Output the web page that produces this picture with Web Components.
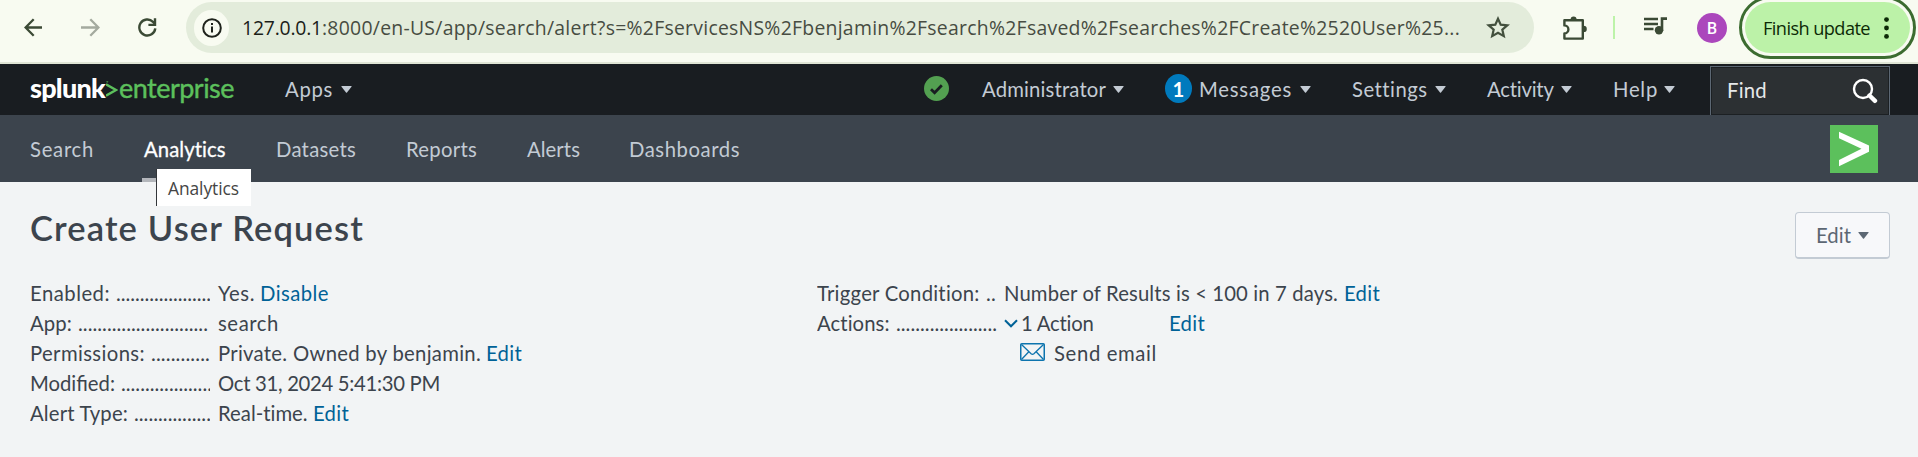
<!DOCTYPE html>
<html lang="en">
<head>
<meta charset="utf-8">
<title>Create User Request</title>
<style>
html,body{margin:0;height:100%;background:#f2f4f5}
body{overflow:hidden;font-family:Lato,"Liberation Sans",sans-serif;font-size:20.3px}
</style>
</head>
<body>
<alert-app></alert-app>
<script>
const define=(name,html,after)=>{
  const t=document.createElement('template');t.innerHTML=html;
  customElements.define(name,class extends HTMLElement{
    constructor(){super();this.attachShadow({mode:'open'}).append(t.content.cloneNode(true));}
    connectedCallback(){if(after)after.call(this);}
  });
};

/* Text tracked to the width given in "w". */
define('fit-text',`<style>:host{display:inline-block;white-space:pre;flex:none}span{display:inline-block}</style><span><slot></slot></span>`,function(){
  const s=this.shadowRoot.querySelector('span');
  const w=+this.getAttribute('w'),n=this.textContent.length;
  s.style.letterSpacing='0px';
  s.style.letterSpacing=((w-s.getBoundingClientRect().width)/n)+'px';
  this.style.width=w+'px';
});

define('caret-down',`<style>:host{display:block;flex:none;width:11px;height:7px}svg{display:block}</style>
<svg width="11" height="7" viewBox="0 0 11 7"><path fill="currentColor" d="M.8 0h9.4q.7 0 .3.7L6 6.4q-.5.5-1 0L.5.7Q.1 0 .8 0z"/></svg>`);

define('browser-bar',`<style>
:host{display:flex;box-sizing:border-box;height:64px;background:#f8fbf1;border-bottom:2px solid #dfe5d5;padding-top:2px;font-family:"Open Sans","Noto Sans",sans-serif;font-size:19.4px;align-items:flex-start}
svg{display:block;flex:none}
.h{height:51px;display:flex;align-items:center;flex:none}
.omni{margin-left:29px;width:1348px;box-sizing:border-box;background:#e3ecdb;border-radius:26px;padding-left:8px;color:#474c42}
.info{width:35px;height:36px;border-radius:18px;background:#f8fbf1;display:flex;align-items:center;justify-content:center;margin-right:13px}
.host{color:#1b1e18}
.div{width:2px;height:23px;background:#bdf3a9;margin-left:26px}
.av{width:30px;height:30px;border-radius:50%;background:#ab47bc;color:#fff;font:500 16px/31px Roboto,sans-serif;text-align:center;margin-left:29px}
.upd{position:relative;margin-left:18px;width:165px;box-sizing:border-box;border-radius:26px;background:#bcf2a8;color:#0c2a06;padding-left:18px;font-size:18.2px;font-stretch:94%}
.upd::before{content:"";position:absolute;left:-6px;right:-6px;top:-6px;bottom:-6px;border:3px solid #3c6c30;border-radius:32px;box-sizing:border-box}
</style>
<div class="h">
<svg style="margin-left:24px" width="19" height="19" viewBox="0 0 19 19" fill="none" stroke="#3b4a35" stroke-width="2.3"><path d="M18 9.5H2M9.7 1.3 1.6 9.5l8.1 8.2"/></svg>
<svg style="margin-left:38px" width="19" height="19" viewBox="0 0 19 19" fill="none" stroke="#a4aa9f" stroke-width="2.3"><path d="M0 9.5h17M9.3 1.3l8.1 8.2-8.1 8.2"/></svg>
<svg style="margin-left:38px" width="19" height="19" viewBox="0 0 19 19"><path fill="none" stroke="#3b4a35" stroke-width="2.4" d="M17.3 10.4A8 8 0 1 1 15 3.8l2 2"/><path fill="none" stroke="#3b4a35" stroke-width="2.4" d="M17 .3v6.6h-6.6"/></svg>
</div>
<div class="h omni">
<div class="info"><svg width="20" height="20" viewBox="0 0 20 20"><circle cx="10" cy="10" r="8.8" fill="none" stroke="#1f231c" stroke-width="2"/><path d="M10 8.6v6M10 5v2" stroke="#1f231c" stroke-width="2"/></svg></div>
<fit-text class="host" w="80">127.0.0.1</fit-text><fit-text w="1138">:8000/en-US/app/search/alert?s=%2FservicesNS%2Fbenjamin%2Fsearch%2Fsaved%2Fsearches%2FCreate%2520User%25...</fit-text>
<svg style="margin-left:26px" width="24" height="23" viewBox="0 0 24 23"><path fill="none" stroke="#43503d" stroke-width="2.2" d="m12 2.7 2.7 6 6.6.6-5 4.3 1.5 6.5-5.8-3.4-5.8 3.4 1.5-6.5-5-4.3 6.6-.6z"/></svg>
</div>
<div class="h">
<svg style="margin-left:28px" width="26" height="26" viewBox="0 0 26 26"><path fill="none" stroke="#3b4a35" stroke-width="2.4" stroke-linejoin="round" d="M2.4 5.2h18.4v18.4H2.4v-5.2a4 4 0 0 0 0-8z"/><path fill="#3b4a35" d="M8.6 4.4a3 3 0 0 1 6 0zM21.6 10.7a3.2 3.2 0 0 1 0 6.4z"/></svg>
<div class="div" style="margin-left:25px"></div>
<svg style="margin:-3px 0 0 29px" width="24" height="18" viewBox="0 0 24 18"><path d="M0 2h14M0 7h14M0 12h9.5" stroke="#3b4a35" stroke-width="2.3"/><circle cx="15" cy="13.3" r="4.2" fill="#3b4a35"/><path d="M18 14V1.6h5" fill="none" stroke="#3b4a35" stroke-width="2.6"/></svg>
<div class="av">B</div>
</div>
<div class="h upd"><fit-text w="107">Finish update</fit-text><svg style="margin-left:14px" width="5" height="22" viewBox="0 0 5 22" fill="#0c2a06"><circle cx="2.5" cy="2.6" r="2.4"/><circle cx="2.5" cy="11" r="2.4"/><circle cx="2.5" cy="19.4" r="2.4"/></svg></div>`);

define('splunk-header',`<style>
:host{display:flex;height:51px;background:#191d21;color:#c3cbd4;align-items:center}
fit-text{position:relative;top:-1px}
caret-down{margin-left:8px}
.logo{display:flex;margin-left:30px;font-size:27px;align-items:center}
.logo fit-text{top:-2px}
.s{color:#fff;font-weight:900}.g{color:#5cc05c;}
.e{font-weight:400;-webkit-text-stroke:.4px #5cc05c}
svg{display:block;flex:none}
.badge{width:27px;height:29px;border-radius:50%;background:#007abd;color:#fff;font-weight:700;text-align:center;line-height:30px;margin:-3px 8px 0 41px}
.find{align-self:flex-start;margin:2px 0 -1px 36px;box-sizing:border-box;width:180px;height:50px;border:1px solid #5c6773;background:#2c3033;box-shadow:inset 0 0 0 1px #1c2023;color:#e6e8ea;display:flex;align-items:center;padding-left:16px;position:relative}
</style>
<div class="logo"><fit-text class="s" w="75">splunk</fit-text><svg style="margin-left:1px" width="12" height="17" viewBox="0 0 12 17"><path d="M0 3.3 10 9 0 14.7" fill="none" stroke="#5cc05c" stroke-width="2.4"/><circle cx="1.3" cy=".8" r="1" fill="#3b7c3d"/></svg><fit-text class="g e" w="115" style="margin-left:1px">enterprise</fit-text></div>
<fit-text w="48" style="margin-left:51px">Apps</fit-text><caret-down></caret-down>
<svg style="margin:-3px 0 0 572px" width="25" height="25" viewBox="0 0 25 25"><circle cx="12.5" cy="12.5" r="12.5" fill="#53a051"/><path d="m7 13.2 3.6 3.5 7.2-7.4" fill="none" stroke="#191d21" stroke-width="2.8"/></svg>
<fit-text w="124" style="margin-left:33px">Administrator</fit-text><caret-down style="margin-left:7px"></caret-down>
<div class="badge">1</div>
<fit-text w="93" style="margin-left:-1px">Messages</fit-text><caret-down style="margin-left:8px"></caret-down>
<fit-text w="75" style="margin-left:41px">Settings</fit-text><caret-down></caret-down>
<fit-text w="67" style="margin-left:41px">Activity</fit-text><caret-down style="margin-left:7px"></caret-down>
<fit-text w="45" style="margin-left:41px">Help</fit-text><caret-down style="margin-left:6px"></caret-down>
<div class="find" style="margin-left:35px"><fit-text w="40" style="top:-1px">Find</fit-text><svg style="margin:-1px 0 0 85px" width="26" height="26" viewBox="0 0 26 26"><circle cx="11" cy="11" r="9" fill="none" stroke="#fff" stroke-width="2.4"/><path d="m17.5 17.5 5.5 5.3" stroke="#fff" stroke-width="4.4" stroke-linecap="round"/></svg></div>`);

define('nav-item',`<style>:host{display:flex;flex:none;height:67px;align-items:center;position:relative}
:host([active]){color:#fff;-webkit-text-stroke:.3px #fff}
:host([active])::after{content:"";position:absolute;left:-2px;right:-2px;bottom:0;height:4px;background:#b3b6bb}</style><slot></slot>`);

define('app-nav',`<style>
:host{display:flex;height:67px;background:#3c444d;color:#c3cbd4;align-items:center;padding-left:30px;position:relative}
nav-item+nav-item{margin-left:50px}
.tip{position:absolute;left:156px;top:54px;width:95px;height:37px;border-left:1px solid #33363a;background:#fff;color:#454545;font-family:"Open Sans",sans-serif;font-size:17.4px;display:flex;align-items:center;padding-left:11px;box-sizing:border-box;z-index:2}
.logo{margin-left:auto;margin-right:40px;margin-top:1px;display:block;background:#5cc05c}
</style>
<nav-item><fit-text w="64">Search</fit-text></nav-item>
<nav-item active><fit-text w="82">Analytics</fit-text></nav-item>
<nav-item><fit-text w="80">Datasets</fit-text></nav-item>
<nav-item><fit-text w="71">Reports</fit-text></nav-item>
<nav-item><fit-text w="53">Alerts</fit-text></nav-item>
<nav-item style="margin-left:49px"><fit-text w="111">Dashboards</fit-text></nav-item>
<svg class="logo" width="48" height="48" viewBox="0 0 48 48"><path fill="#fff" d="M9 6.8 39 20.6v6.2L9 41.2v-6.2l22.5-11.2L9 13.2z"/></svg>
<div class="tip"><fit-text w="71">Analytics</fit-text></div>`);

define('detail-row',`<style>
:host{display:flex;height:30px;line-height:30px;white-space:pre}
.l{width:180px;overflow:hidden;flex:none;display:flex;gap:6px;margin-right:var(--gap,7px)}
.v{display:flex}
</style><div class="l"><slot name="label"></slot></div><div class="v"><slot></slot></div>`);

define('alert-details',`<style>
:host{display:flex;padding:0 0 0 30px;color:#3c444d}
section{width:787px}
section:first-of-type{--gap:8px}
a{color:#006297}
svg{display:block;flex:none}
</style>
<section>
<detail-row><fit-text slot="label" w="80">Enabled:</fit-text><fit-text slot="label" w="95">....................</fit-text><fit-text w="37">Yes.</fit-text><a style="margin-left:5px"><fit-text w="69">Disable</fit-text></a></detail-row>
<detail-row><fit-text slot="label" w="42">App:</fit-text><fit-text slot="label" w="130">...........................</fit-text><fit-text w="61">search</fit-text></detail-row>
<detail-row><fit-text slot="label" w="115">Permissions:</fit-text><fit-text slot="label" w="59">............</fit-text><fit-text w="263">Private. Owned by benjamin.</fit-text><a style="margin-left:5px"><fit-text w="36">Edit</fit-text></a></detail-row>
<detail-row><fit-text slot="label" w="85">Modified:</fit-text><fit-text slot="label" w="91">...................</fit-text><fit-text w="222">Oct 31, 2024 5:41:30 PM</fit-text></detail-row>
<detail-row><fit-text slot="label" w="98">Alert Type:</fit-text><fit-text slot="label" w="77">................</fit-text><fit-text w="90">Real-time.</fit-text><a style="margin-left:5px"><fit-text w="36">Edit</fit-text></a></detail-row>
</section>
<section>
<detail-row><fit-text slot="label" w="163">Trigger Condition:</fit-text><fit-text slot="label" w="10">..</fit-text><fit-text w="334">Number of Results is &lt; 100 in 7 days.</fit-text><a style="margin-left:6px"><fit-text w="36">Edit</fit-text></a></detail-row>
<detail-row><fit-text slot="label" w="73">Actions:</fit-text><fit-text slot="label" w="101">.....................</fit-text><svg style="margin-top:11px" width="14" height="10" viewBox="0 0 14 10"><path d="m1 1.3 6 6 6-6" fill="none" stroke="#006297" stroke-width="2"/></svg><fit-text w="73" style="margin-left:3px">1 Action</fit-text><a style="margin-left:75px"><fit-text w="36">Edit</fit-text></a></detail-row>
<detail-row><svg style="margin:5px 0 0 16px" width="25" height="18" viewBox="0 0 25 18" fill="none" stroke="#0d74ae" stroke-width="1.5"><rect x=".75" y=".75" width="23.5" height="16.5" rx="1"/><path d="m1.5 1.5 9.6 9.2q1.4 1.2 2.8 0l9.6-9.2M1.5 16.5l7.3-7.8M23.5 16.5l-7.3-7.8" stroke-width="1.3"/></svg><fit-text w="103" style="margin-left:9px">Send email</fit-text></detail-row>
</section>`);

define('page-title',`<style>
:host{display:flex;height:96px;padding:0 28px 0 30px;justify-content:space-between;align-items:flex-start;color:#3c444d}
h1{margin:26px 0 0;font-size:34.5px;line-height:40px;font-weight:600}
.btn{margin-top:30px;width:95px;height:47px;box-sizing:border-box;border:1px solid #c3cbd4;border-bottom-width:2px;border-radius:4px;background:#f7f8fa;color:#5c6773;display:flex;align-items:center;padding-left:20px}
caret-down{margin-left:7px}
</style>
<h1><fit-text w="334">Create User Request</fit-text></h1>
<div class="btn"><fit-text w="35">Edit</fit-text><caret-down></caret-down></div>`);

define('alert-app',`<style>:host{display:block}</style>
<browser-bar></browser-bar><splunk-header></splunk-header><app-nav></app-nav><page-title></page-title><alert-details></alert-details>`);
</script>
</body>
</html>
